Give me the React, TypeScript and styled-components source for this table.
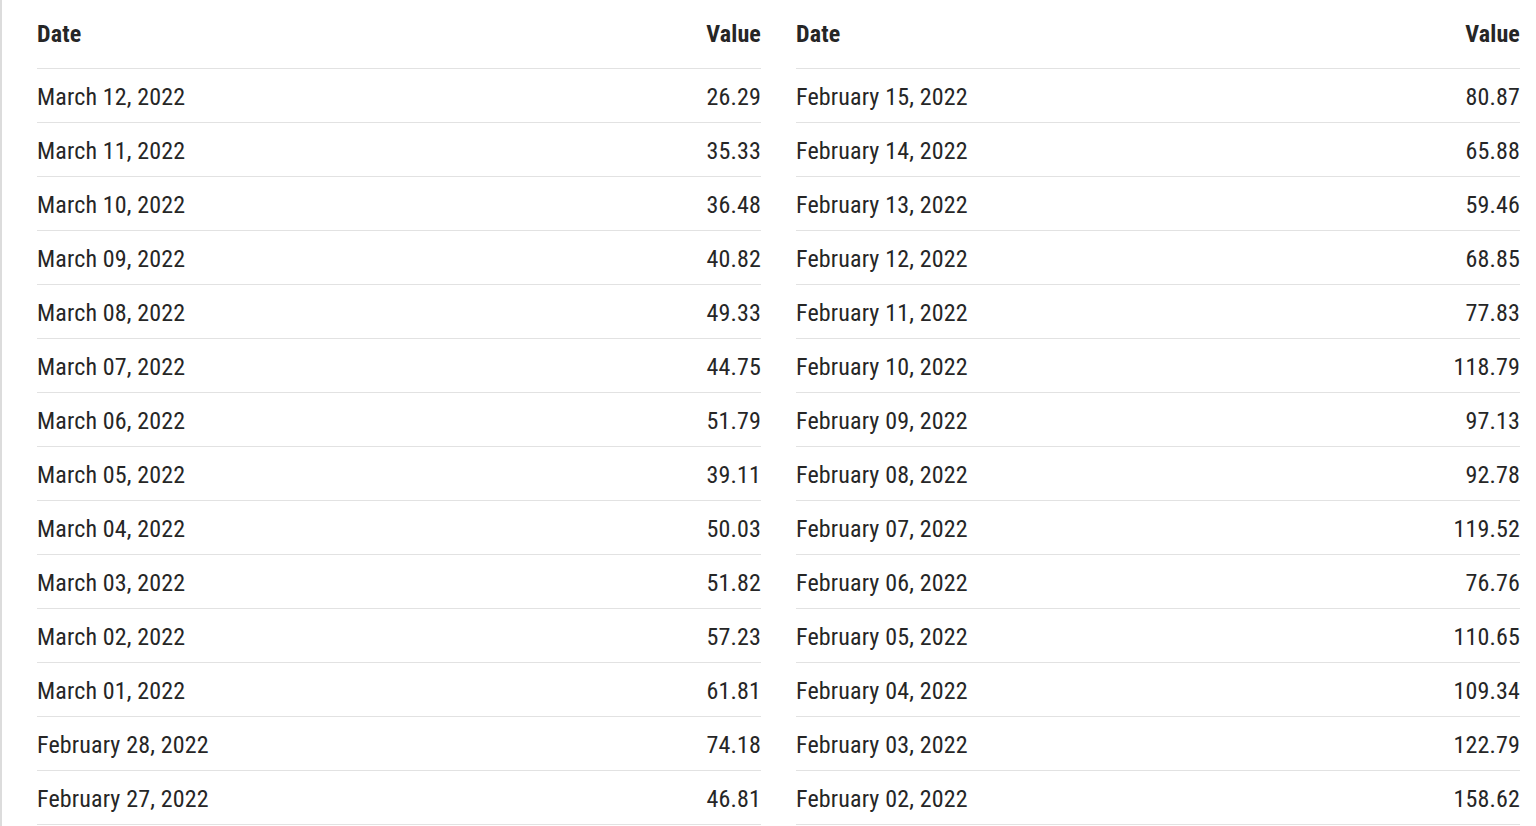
import React from 'react'
import styled, { createGlobalStyle } from 'styled-components'

const Global = createGlobalStyle`
  html, body {
    margin: 0;
    padding: 0;
    background: #fff;
  }
  body {
    font-family: 'Roboto Condensed', Roboto, 'Liberation Sans', sans-serif;
    font-stretch: condensed;
    color: #262626;
  }
`

const Page = styled.div`
  min-height: 826px;
  box-sizing: border-box;
  border-left: 2px solid #dcdcdc;
  padding: 0 16px 0 35px;
  display: grid;
  grid-template-columns: 1fr 1fr;
  column-gap: 35px;
`

const Table = styled.div`
  display: flex;
  flex-direction: column;
`

const Row = styled.div<{ head?: boolean }>`
  display: flex;
  justify-content: space-between;
  align-items: center;
  height: ${(p) => (p.head ? '69px' : '54px')};
  padding-top: ${(p) => (p.head ? '0' : '3px')};
  box-sizing: border-box;
  border-bottom: 1px solid #e2e2e2;
  font-size: 24px;
  letter-spacing: 0.15px;
  font-weight: ${(p) => (p.head ? 700 : 400)};
`

const Cell = styled.span<{ right?: boolean }>`
  text-align: ${(p) => (p.right ? 'right' : 'left')};
`

const left: [string, string][] = [
  ['March 12, 2022', '26.29'],
  ['March 11, 2022', '35.33'],
  ['March 10, 2022', '36.48'],
  ['March 09, 2022', '40.82'],
  ['March 08, 2022', '49.33'],
  ['March 07, 2022', '44.75'],
  ['March 06, 2022', '51.79'],
  ['March 05, 2022', '39.11'],
  ['March 04, 2022', '50.03'],
  ['March 03, 2022', '51.82'],
  ['March 02, 2022', '57.23'],
  ['March 01, 2022', '61.81'],
  ['February 28, 2022', '74.18'],
  ['February 27, 2022', '46.81'],
]

const right: [string, string][] = [
  ['February 15, 2022', '80.87'],
  ['February 14, 2022', '65.88'],
  ['February 13, 2022', '59.46'],
  ['February 12, 2022', '68.85'],
  ['February 11, 2022', '77.83'],
  ['February 10, 2022', '118.79'],
  ['February 09, 2022', '97.13'],
  ['February 08, 2022', '92.78'],
  ['February 07, 2022', '119.52'],
  ['February 06, 2022', '76.76'],
  ['February 05, 2022', '110.65'],
  ['February 04, 2022', '109.34'],
  ['February 03, 2022', '122.79'],
  ['February 02, 2022', '158.62'],
]

function ValueTable({ rows }: { rows: [string, string][] }) {
  return (
    <Table>
      <Row head>
        <Cell>Date</Cell>
        <Cell right>Value</Cell>
      </Row>
      {rows.map(([d, v]) => (
        <Row key={d}>
          <Cell>{d}</Cell>
          <Cell right>{v}</Cell>
        </Row>
      ))}
    </Table>
  )
}

export default function App() {
  return (
    <>
      <Global />
      <Page>
        <ValueTable rows={left} />
        <ValueTable rows={right} />
      </Page>
    </>
  )
}
